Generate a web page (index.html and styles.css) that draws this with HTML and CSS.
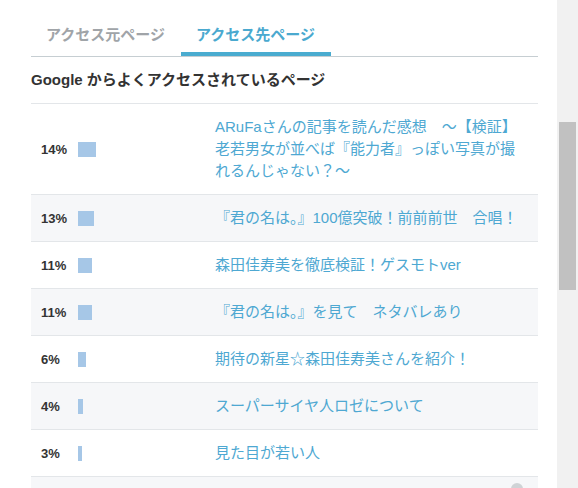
FILE: index.html
```html
<!DOCTYPE html>
<html lang="ja">
<head>
<meta charset="utf-8">
<title>アクセス先ページ</title>
<link rel="stylesheet" href="styles.css">
</head>
<body>
<div class="page">
  <div class="main">
    <div class="tabs">
      <div class="tab">アクセス元ページ</div>
      <div class="tab active">アクセス先ページ</div>
    </div>
    <div class="heading">Google からよくアクセスされているページ</div>
    <div class="rows">
      <div class="row">
        <div class="pct"><span class="num">14%</span><span class="bar" style="width:18px"></span></div>
        <a class="title" href="#">ARuFaさんの記事を読んだ感想　～【検証】老若男女が並べば『能力者』っぽい写真が撮れるんじゃない？～</a>
      </div>
      <div class="row alt">
        <div class="pct"><span class="num">13%</span><span class="bar" style="width:16px"></span></div>
        <a class="title" href="#">『君の名は。』100億突破！前前前世　合唱！</a>
      </div>
      <div class="row">
        <div class="pct"><span class="num">11%</span><span class="bar" style="width:14px"></span></div>
        <a class="title" href="#">森田佳寿美を徹底検証！ゲスモトver</a>
      </div>
      <div class="row alt">
        <div class="pct"><span class="num">11%</span><span class="bar" style="width:14px"></span></div>
        <a class="title" href="#">『君の名は。』を見て　ネタバレあり</a>
      </div>
      <div class="row">
        <div class="pct"><span class="num">6%</span><span class="bar" style="width:8px"></span></div>
        <a class="title" href="#">期待の新星☆森田佳寿美さんを紹介！</a>
      </div>
      <div class="row alt">
        <div class="pct"><span class="num">4%</span><span class="bar" style="width:5px"></span></div>
        <a class="title" href="#">スーパーサイヤ人ロゼについて</a>
      </div>
      <div class="row">
        <div class="pct"><span class="num">3%</span><span class="bar" style="width:4px"></span></div>
        <a class="title" href="#">見た目が若い人</a>
      </div>
      <div class="row alt empty"></div>
    </div>
    <span class="totop"></span>
  </div>
  <div class="scrollbar"><div class="thumb"></div></div>
</div>
</body>
</html>
```
FILE: styles.css
```css
html, body {
  margin: 0;
  padding: 0;
  height: 488px;
  overflow: hidden;
  background: #ffffff;
}

body {
  font-family: "Liberation Sans", "Noto Sans CJK JP", sans-serif;
  color: #333333;
}

.page {
  display: flex;
  height: 488px;
}

.main {
  position: relative;
  flex: 1;
  padding: 0 19px 0 31px;
  overflow: hidden;
}

.tabs {
  display: flex;
  border-bottom: 1px solid #c6ced2;
}

.tab {
  width: 150px;
  box-sizing: border-box;
  padding: 24px 15px 6px;
  font-size: 15px;
  line-height: 22px;
  font-weight: bold;
  color: #a0a4a8;
  border-bottom: 4px solid transparent;
  white-space: nowrap;
}

.tab.active {
  color: #4aa9cf;
  border-bottom-color: #4aacd0;
}

.heading {
  padding: 12px 0;
  font-size: 15px;
  line-height: 22px;
  font-weight: bold;
  color: #333333;
  border-bottom: 1px solid #e3e6e9;
}

.row {
  display: flex;
  align-items: center;
  border-bottom: 1px solid #e3e6e9;
}

.row.alt {
  background: #f6f7f9;
}

.row.empty {
  height: 46px;
}

.pct {
  width: 174px;
  flex: none;
  box-sizing: border-box;
  padding-left: 10px;
  display: flex;
  align-items: center;
}

.num {
  width: 37px;
  flex: none;
  font-size: 13px;
  font-weight: bold;
  color: #333333;
}

.bar {
  display: block;
  height: 15px;
  background: #a6c7e7;
}

.title {
  flex: 1;
  padding: 12px 10px;
  font-size: 15px;
  line-height: 22px;
  color: #4ea8d2;
  text-decoration: none;
}

.totop {
  position: absolute;
  left: 511px;
  top: 483px;
  width: 12px;
  height: 12px;
  border-radius: 50%;
  background: #cfd3d6;
}

.scrollbar {
  width: 21px;
  flex: none;
  background: #f1f1f1;
  box-sizing: border-box;
  padding: 122px 2px 0;
}

.thumb {
  width: 17px;
  height: 168px;
  background: #c1c1c1;
}
```
